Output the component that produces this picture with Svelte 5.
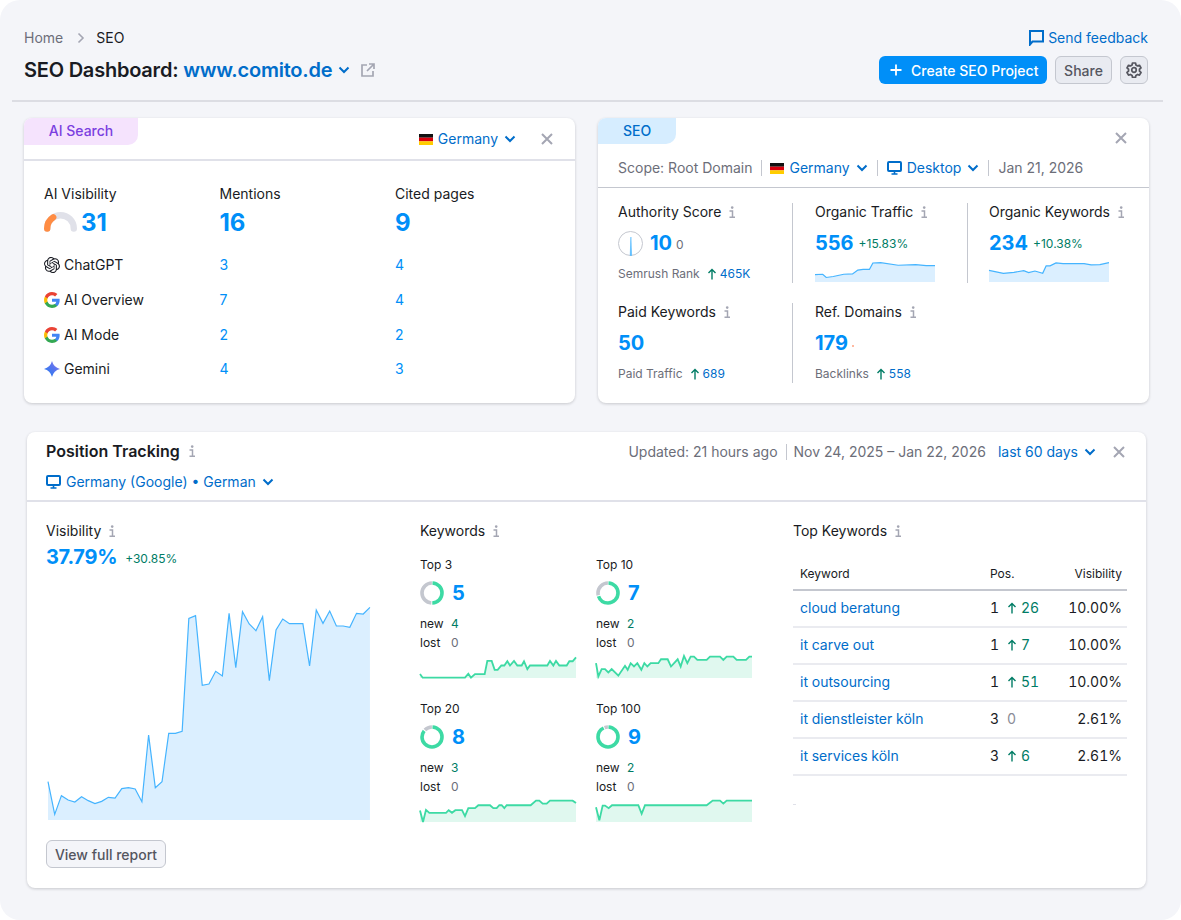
<script>
  const pts = (a) => a.map((p) => p.join(',')).join(' ');
  const area = (a, bottom) => `${a[0][0]},${bottom} ${pts(a)} ${a[a.length - 1][0]},${bottom}`;

  const visY = [545,643,587,600,606,590,602,611,604,592,594,566,563,567,605,405,563,545,400,400,394,55,47,256,252,214,228,40,203,35,72,92,50,242,90,57,71,71,71,198,30,70,33,78,78,82,40,42,22];
  const visLine = visY.map((y, i) => [55 + i * 20.1, y]);

  const traffic = [[613,239],[635,238],[645,248],[665,245],[695,238],[720,237],[735,225],[750,223],[768,223],[778,203],[800,202],[850,210],[900,208],[930,211],[955,211]];
  const orgKw = [[1109,226],[1150,235],[1180,232],[1208,227],[1222,233],[1240,228],[1262,235],[1272,212],[1283,212],[1300,203],[1320,205],[1380,205],[1400,209],[1425,208],[1451,202]];

  const tops = [
    { label: 'Top 3', value: 5, isNew: 4, share: 0.5, x0: 30, y0: 315, bottom: 385,
      line: [[30,373],[38,384],[165,384],[175,372],[183,384],[195,373],[224,373],[232,333],[245,333],[254,360],[263,360],[274,347],[283,347],[292,334],[300,347],[312,333],[322,347],[335,347],[342,334],[352,358],[360,347],[412,347],[420,333],[430,347],[438,333],[448,347],[470,347],[478,334],[488,334],[498,322]] },
    { label: 'Top 10', value: 7, isNew: 2, share: 0.7, x0: 558, y0: 315, bottom: 385,
      line: [[558,340],[565,380],[575,358],[585,358],[595,368],[605,358],[625,378],[645,348],[653,360],[662,340],[672,350],[682,340],[694,360],[703,340],[712,350],[722,340],[745,340],[753,328],[773,328],[783,350],[803,328],[812,350],[822,318],[832,340],[842,320],[852,320],[862,330],[890,330],[900,320],[930,320],[940,330],[950,320],[970,320],[980,330],[1008,330],[1018,320],[1026,320]] },
    { label: 'Top 20', value: 8, isNew: 3, share: 0.86, x0: 30, y0: 310, bottom: 380,
      line: [[30,345],[39,380],[48,343],[58,352],[108,352],[116,344],[126,352],[136,344],[156,344],[165,362],[175,338],[195,338],[205,329],[240,329],[250,338],[260,338],[268,329],[275,329],[283,338],[290,329],[362,329],[378,315],[388,315],[398,324],[410,324],[420,315],[488,315],[498,322]] },
    { label: 'Top 100', value: 9, isNew: 2, share: 0.93, x0: 558, y0: 310, bottom: 380,
      line: [[558,335],[568,375],[578,330],[585,330],[596,338],[606,329],[685,329],[695,355],[705,329],[890,329],[908,315],[930,315],[940,324],[950,315],[1026,315]] }
  ];

  const keywords = [
    { k: 'cloud beratung', pos: 1, delta: 26, vis: '10.00%' },
    { k: 'it carve out', pos: 1, delta: 7, vis: '10.00%' },
    { k: 'it outsourcing', pos: 1, delta: 51, vis: '10.00%' },
    { k: 'it dienstleister köln', pos: 3, delta: 0, vis: '2.61%' },
    { k: 'it services köln', pos: 3, delta: 6, vis: '2.61%' }
  ];

  const aiRows = [
    { name: 'ChatGPT', icon: 'gpt', m: 3, c: 4 },
    { name: 'AI Overview', icon: 'g', m: 7, c: 4 },
    { name: 'AI Mode', icon: 'g', m: 2, c: 2 },
    { name: 'Gemini', icon: 'gem', m: 4, c: 3 }
  ];

  const C = 2 * Math.PI * 10;
</script>

{#snippet info()}
  <svg class="info" width="8" height="13" viewBox="0 0 8 13" aria-hidden="true"><circle cx="4.2" cy="1.6" r="1.3" fill="#a4a6b3"/><path d="M1.5 5H4.5V11.2H7M4.5 11.2H1.5" fill="none" stroke="#a4a6b3" stroke-width="1.5"/></svg>
{/snippet}
{#snippet chev()}
  <svg class="chev" width="12" height="8" viewBox="0 0 12 8" aria-hidden="true"><path d="M1.5 1.5 6 6 10.5 1.5" fill="none" stroke="#006dca" stroke-width="2"/></svg>
{/snippet}
{#snippet close()}
  <svg class="close" width="12" height="12" viewBox="0 0 12 12" aria-hidden="true"><path d="M1 1 11 11M11 1 1 11" fill="none" stroke="#a4a6b3" stroke-width="2"/></svg>
{/snippet}
{#snippet flag()}
  <svg class="flag" width="14" height="11" viewBox="0 0 14 11" aria-hidden="true"><rect width="14" height="3.7" fill="#111"/><rect y="3.7" width="14" height="3.7" fill="#d9000d"/><rect y="7.3" width="14" height="3.7" fill="#ffcd00"/></svg>
{/snippet}
{#snippet monitor()}
  <svg class="mon" width="15" height="14" viewBox="0 0 15 14" aria-hidden="true"><rect x="1" y="1" width="13" height="9" rx="1" fill="none" stroke="#006dca" stroke-width="2"/><path d="M7.5 10v2.5M4.5 13h6" stroke="#006dca" stroke-width="1.6"/></svg>
{/snippet}
{#snippet up()}
  <svg class="up" width="10" height="12" viewBox="0 0 10 12" aria-hidden="true"><path d="M5 11.5V1.5M1.5 5 5 1.5 8.5 5" fill="none" stroke="#007c65" stroke-width="1.4"/></svg>
{/snippet}
{#snippet gLogo()}
  <svg width="16" height="16" viewBox="0 0 24 24" aria-hidden="true"><path fill="#4285F4" d="M23.5 12.3c0-.8-.1-1.6-.2-2.3H12v4.5h6.5c-.3 1.5-1.1 2.8-2.4 3.6v3h3.9c2.2-2.1 3.5-5.1 3.5-8.8z"/><path fill="#34A853" d="M12 24c3.2 0 6-1.1 8-2.9l-3.9-3c-1.1.7-2.5 1.2-4.1 1.2-3.1 0-5.8-2.1-6.7-5H1.3v3.1C3.3 21.3 7.3 24 12 24z"/><path fill="#FBBC05" d="M5.3 14.3c-.5-1.5-.5-3.1 0-4.6V6.6H1.3c-1.7 3.3-1.7 7.5 0 10.8l4-3.1z"/><path fill="#EA4335" d="M12 4.8c1.8 0 3.4.6 4.6 1.8l3.5-3.5C18 1.1 15.2 0 12 0 7.3 0 3.3 2.7 1.3 6.6l4 3.1c.9-2.8 3.6-4.9 6.7-4.9z"/></svg>
{/snippet}
{#snippet gpt()}
  <svg width="16" height="16" viewBox="0 0 24 24" aria-hidden="true"><path fill="#191b23" d="M22.2819 9.8211a5.9847 5.9847 0 0 0-.5157-4.9108 6.0462 6.0462 0 0 0-6.5098-2.9A6.0651 6.0651 0 0 0 4.9807 4.1818a5.9847 5.9847 0 0 0-3.9977 2.9 6.0462 6.0462 0 0 0 .7427 7.0966 5.98 5.98 0 0 0 .511 4.9107 6.051 6.051 0 0 0 6.5146 2.9001A5.9847 5.9847 0 0 0 13.2599 24a6.0557 6.0557 0 0 0 5.7718-4.2058 5.9894 5.9894 0 0 0 3.9977-2.9001 6.0557 6.0557 0 0 0-.7475-7.0729zm-9.022 12.6081a4.4755 4.4755 0 0 1-2.8764-1.0408l.1419-.0804 4.7783-2.7582a.7948.7948 0 0 0 .3927-.6813v-6.7369l2.02 1.1686a.071.071 0 0 1 .038.052v5.5826a4.504 4.504 0 0 1-4.4945 4.4944zm-9.6607-4.1254a4.4708 4.4708 0 0 1-.5346-3.0137l.142.0852 4.783 2.7582a.7712.7712 0 0 0 .7806 0l5.8428-3.3685v2.3324a.0804.0804 0 0 1-.0332.0615L9.74 19.9502a4.4992 4.4992 0 0 1-6.1408-1.6464zM2.3408 7.8956a4.485 4.485 0 0 1 2.3655-1.9728V11.6a.7664.7664 0 0 0 .3879.6765l5.8144 3.3543-2.0201 1.1685a.0757.0757 0 0 1-.071 0l-4.8303-2.7865A4.504 4.504 0 0 1 2.3408 7.872zm16.5963 3.8558L13.1038 8.364 15.1192 7.2a.0757.0757 0 0 1 .071 0l4.8303 2.7913a4.4944 4.4944 0 0 1-.6765 8.1042v-5.6772a.79.79 0 0 0-.407-.667zm2.0107-3.0231l-.142-.0852-4.7735-2.7818a.7759.7759 0 0 0-.7854 0L9.409 9.2297V6.8974a.0662.0662 0 0 1 .0284-.0615l4.8303-2.7866a4.4992 4.4992 0 0 1 6.6802 4.66zM8.3065 12.863l-2.02-1.1638a.0804.0804 0 0 1-.038-.0567V6.0742a4.4992 4.4992 0 0 1 7.3757-3.4537l-.142.0805L8.704 5.459a.7948.7948 0 0 0-.3927.6813zm1.0976-2.3654l2.602-1.4998 2.6069 1.4998v2.9994l-2.5974 1.4997-2.6067-1.4997Z"/></svg>
{/snippet}
{#snippet gem()}
  <svg width="16" height="16" viewBox="0 0 24 24" aria-hidden="true"><defs><linearGradient id="gemg" x1="0" y1="1" x2="1" y2="0"><stop offset="0" stop-color="#1c7df0"/><stop offset="0.6" stop-color="#5b74ee"/><stop offset="1" stop-color="#a58df0"/></linearGradient></defs><path fill="url(#gemg)" d="M12 0Q14.5 9.5 24 12Q14.5 14.5 12 24Q9.5 14.5 0 12Q9.5 9.5 12 0Z"/></svg>
{/snippet}

<div class="page">
  <header class="head">
    <div>
      <nav class="crumbs">
        <span class="grey">Home</span>
        <svg width="8" height="12" viewBox="0 0 8 12" aria-hidden="true"><path d="M1.5 1.5 6 6 1.5 10.5" fill="none" stroke="#a4a6b3" stroke-width="1.6"/></svg>
        <span>SEO</span>
      </nav>
      <h1 class="title">
        SEO Dashboard:&nbsp;<span class="domain">www.comito.de</span>
        {@render chev()}
        <svg class="ext" width="14" height="14" viewBox="0 0 14 14" aria-hidden="true"><path d="M6 2H1v11h11V8M8 1h5v5M13 1 6 8" fill="none" stroke="#a4a6b3" stroke-width="1.7"/></svg>
      </h1>
    </div>
    <div class="actions">
      <a class="feedback" href="#f">
        <svg width="15" height="16" viewBox="0 0 15 16" aria-hidden="true"><path d="M1 14.5V1h13v10.5H3.5z" fill="none" stroke="#006dca" stroke-width="2"/></svg>
        Send feedback
      </a>
      <div class="btns">
        <button class="primary"><svg width="12" height="12" viewBox="0 0 12 12" aria-hidden="true"><path d="M6 .5v11M.5 6h11" stroke="#fff" stroke-width="1.8"/></svg>Create SEO Project</button>
        <button class="sec">Share</button>
        <button class="sec gear" aria-label="Settings"><svg width="16" height="16" viewBox="0 0 24 24" aria-hidden="true"><path fill="none" stroke="#55565f" stroke-width="2.6" stroke-linejoin="round" d="M9.7 1.5h4.6l.6 3 2.4 1.4 2.9-1 2.3 4-2.3 2v2.8l2.3 2-2.3 4-2.9-1-2.4 1.4-.6 3H9.7l-.6-3-2.4-1.4-2.9 1-2.3-4 2.3-2v-2.8l-2.3-2 2.3-4 2.9 1 2.4-1.4z"/><circle cx="12" cy="12" r="3.4" fill="none" stroke="#55565f" stroke-width="2.6"/></svg></button>
      </div>
    </div>
  </header>
  <div class="rule"></div>

  <div class="cards">
    <section class="card ai">
      <div class="ai-head">
        <div class="tab tab-ai">AI Search</div>
        <div class="ai-ctrl">
          {@render flag()}
          <span class="link">Germany</span>
          {@render chev()}
          {@render close()}
        </div>
      </div>
      <div class="ai-body">
        <div class="ai-grid">
          <div>AI Visibility</div><div>Mentions</div><div>Cited pages</div>
          <div class="big-row">
            <svg class="gauge" width="33" height="21" viewBox="0 0 33 21" aria-hidden="true"><path d="M3.2 17.5A13.3 13.3 0 0 1 29.800 17.5" fill="none" stroke="#e0e1e9" stroke-width="6.4" stroke-linecap="round"/><path d="M3.2 17.500A13.300 13.300 0 0 1 9.200 6.300" fill="none" stroke="#ff8c43" stroke-width="6.400" stroke-linecap="round"/></svg>
            <span class="big">31</span>
          </div>
          <div class="big-row"><span class="big">16</span></div>
          <div class="big-row"><span class="big">9</span></div>
        </div>
        <div class="ai-rows">
          {#each aiRows as r}
            <div class="ai-row">
              <div class="engine">
                {#if r.icon === 'gpt'}{@render gpt()}{:else if r.icon === 'g'}{@render gLogo()}{:else}{@render gem()}{/if}
                {r.name}
              </div>
              <div class="num">{r.m}</div>
              <div class="num">{r.c}</div>
            </div>
          {/each}
        </div>
      </div>
    </section>

    <section class="card seo">
      <div class="seo-top">
        <div class="tab tab-seo">SEO</div>
        {@render close()}
      </div>
      <div class="scope">
        <span class="grey">Scope: Root Domain</span><i class="sep"></i>
        {@render flag()}<span class="link">Germany</span>{@render chev()}<i class="sep"></i>
        {@render monitor()}<span class="link">Desktop</span>{@render chev()}<i class="sep"></i>
        <span class="grey">Jan 21, 2026</span>
      </div>
      <div class="metrics">
        <div class="cell c1">
          <div class="mt">Authority Score {@render info()}</div>
          <div class="mv">
            <svg width="25" height="25" viewBox="0 0 25 25" aria-hidden="true"><circle cx="12.5" cy="12.5" r="12" fill="none" stroke="#c4c7cf"/><path d="M12.2 24.5 12.9 6 13.6 24.5z" fill="#45b4ff" stroke="#45b4ff" stroke-width=".5"/></svg>
            <span class="big m">10</span><span class="zero">0</span>
          </div>
          <div class="mf"><span class="grey">Semrush Rank</span>{@render up()}<span class="link">465K</span></div>
        </div>
        <div class="cell c2">
          <div class="mt">Organic Traffic {@render info()}</div>
          <div class="mv"><span class="big">556</span><span class="pct">+15.83%</span></div>
          <svg class="mini" viewBox="613 200 342 62" preserveAspectRatio="none" aria-hidden="true"><polygon points={area(traffic, 262)} fill="#dbefff"/><polyline points={pts(traffic)} fill="none" stroke="#45b4ff" stroke-width="3.6"/></svg>
        </div>
        <div class="cell c3">
          <div class="mt">Organic Keywords {@render info()}</div>
          <div class="mv"><span class="big">234</span><span class="pct">+10.38%</span></div>
          <svg class="mini" viewBox="1109 200 342 62" preserveAspectRatio="none" aria-hidden="true"><polygon points={area(orgKw, 262)} fill="#dbefff"/><polyline points={pts(orgKw)} fill="none" stroke="#45b4ff" stroke-width="3.6"/></svg>
        </div>
        <div class="cell c1">
          <div class="mt">Paid Keywords {@render info()}</div>
          <div class="mv"><span class="big">50</span></div>
          <div class="mf"><span class="grey">Paid Traffic</span>{@render up()}<span class="link">689</span></div>
        </div>
        <div class="cell c2 noline">
          <div class="mt">Ref. Domains {@render info()}</div>
          <div class="mv"><span class="big">179</span><i class="speck"></i></div>
          <div class="mf"><span class="grey">Backlinks</span>{@render up()}<span class="link">558</span></div>
        </div>
      </div>
    </section>
  </div>

  <section class="card pt">
    <div class="pt-head">
      <div>
        <h2 class="pt-title">Position Tracking {@render info()}</h2>
        <div class="pt-sub">{@render monitor()}<span class="link">Germany (Google) • German</span>{@render chev()}</div>
      </div>
      <div class="pt-right">
        <span class="grey">Updated: 21 hours ago</span><i class="sep"></i>
        <span class="grey">Nov 24, 2025 – Jan 22, 2026</span>
        <span class="link last">last 60 days</span>{@render chev()}
        {@render close()}
      </div>
    </div>
    <div class="pt-body">
      <div class="col">
        <div class="coltitle">Visibility {@render info()}</div>
        <div class="visval"><span class="big">37.79%</span><span class="pct">+30.85%</span></div>
        <svg class="vischart" viewBox="55 0 965 660" preserveAspectRatio="none" aria-hidden="true">
          <polygon points={area(visLine, 660)} fill="#dbefff"/>
          <polyline points={pts(visLine)} fill="none" stroke="#45b4ff" stroke-width="3.6"/>
        </svg>
        <button class="sec report">View full report</button>
      </div>
      <div class="col">
        <div class="coltitle">Keywords {@render info()}</div>
        <div class="tops">
          {#each tops as t}
            <div class="top">
              <div class="tl">{t.label}</div>
              <div class="tv">
                <svg width="24" height="24" viewBox="0 0 24 24" aria-hidden="true">
                  <g transform="rotate(-90 12 12)" fill="none" stroke-width="3.6">
                    <circle cx="12" cy="12" r="10" stroke="#c4c7cf" stroke-dasharray="{C * (1 - t.share) - 1} {C}" stroke-dashoffset={-(C * t.share + 0.5)}/>
                    <circle cx="12" cy="12" r="10" stroke="#3ddaa4" stroke-dasharray="{C * t.share - 1} {C}" stroke-dashoffset="-0.5"/>
                  </g>
                </svg>
                <span class="big">{t.value}</span>
              </div>
              <div class="tn"><span>new</span><b>{t.isNew}</b></div>
              <div class="tn lost"><span>lost</span><b>0</b></div>
              <svg class="spark" viewBox="{t.x0} {t.y0} 468 70" preserveAspectRatio="none" aria-hidden="true">
                <polygon points={area(t.line, t.bottom)} fill="#e0f8ef"/>
                <polyline points={pts(t.line)} fill="none" stroke="#3ddaa4" stroke-width="5.5"/>
              </svg>
            </div>
          {/each}
        </div>
      </div>
      <div class="col col3">
        <div class="coltitle">Top Keywords {@render info()}</div>
        <div class="table">
          <div class="tr th"><span>Keyword</span><span>Pos.</span><span class="r">Visibility</span></div>
          {#each keywords as row}
            <div class="tr">
              <span class="link">{row.k}</span>
              <span class="pos"><em>{row.pos}</em>{#if row.delta}{@render up()}<span class="delta">{row.delta}</span>{:else}<span class="nil">0</span>{/if}</span>
              <span class="r">{row.vis}</span>
            </div>
          {/each}
        </div>
        <i class="stray"></i>
      </div>
    </div>
  </section>
</div>

<style>
  :global(body) { margin: 0; background: #fff; }
  .page {
    width: 1181px; height: 920px; box-sizing: border-box; background: #f4f5f9; border-radius: 20px;
    font-family: Inter, "Liberation Sans", sans-serif; font-size: 14px; line-height: 18px; color: #191b23; overflow: hidden;
  }
  svg { display: block; flex: none; }
  button { font-family: inherit; cursor: pointer; }
  h1, h2 { margin: 0; }
  i, em { font-style: normal; }
  .grey { color: #6c6e79; }
  .link { color: #006dca; }

  .head { display: flex; justify-content: space-between; height: 72px; padding: 28px 33px 0 24px; }
  .crumbs { display: flex; align-items: center; gap: 12px; height: 20px; }
  .crumbs svg { margin: 0 -1px 0 2px; }
  .title { display: flex; align-items: center; height: 28px; margin-top: 8px; font-size: 20px; font-weight: 600; line-height: 28px; letter-spacing: -0.22px; }
  .domain { color: #006dca; }
  .title .chev { margin-left: 6px; }
  .ext { margin-left: 11px; }
  .actions { display: flex; flex-direction: column; align-items: flex-end; }
  .feedback { display: flex; align-items: center; gap: 4px; height: 20px; color: #006dca; text-decoration: none; }
  .btns { display: flex; gap: 8px; margin-top: 8px; }
  .primary { display: flex; align-items: center; gap: 9px; height: 28px; width: 168px; padding: 0 0 0 11px; border: 0; border-radius: 6px; background: #008ff8; color: #fff; font-size: 14px; font-weight: 500; }
  .sec { height: 28px; border: 1px solid #c4c7cf; border-radius: 6px; background: #f4f5f9; color: #55565f; font-size: 14px; font-weight: 500; padding: 0; }
  .btns .sec { width: 57px; background: #e9ebf1; }
  .btns .gear { width: 28px; display: flex; align-items: center; justify-content: center; }
  .rule { height: 2px; margin: 0 18px 0 12px; background: #dcdde3; }

  .cards { display: flex; gap: 23px; padding: 16px 32px 0 24px; }
  .card { background: #fff; border-radius: 8px; box-shadow: 0 1px 3px rgba(25, 27, 35, .2); overflow: hidden; }
  .ai, .seo { flex: 1 1 0; height: 285px; }

  .tab { height: 27px; line-height: 26px; text-align: center; border-bottom-right-radius: 10px; font-weight: 500; }
  .tab-ai { width: 114px; background: #f5e3fd; color: #7b3fe0; }
  .tab-seo { width: 78px; background: #d6edff; color: #006dca; }
  .ai-head { display: flex; justify-content: space-between; height: 41px; border-bottom: 2px solid #e0e1e9; }
  .ai-ctrl { display: flex; align-items: center; height: 42px; padding-right: 22px; }
  .ai-ctrl .flag { margin-right: 5px; }
  .ai-ctrl .chev { margin-left: 6px; }
  .ai-ctrl .close { margin-left: 25px; }

  .ai-body { padding: 24px 20px 0; }
  .ai-grid { display: grid; grid-template-columns: 175.5px 175.5px 1fr; }
  .big-row { display: flex; align-items: center; gap: 4px; height: 28px; margin-top: 6px; }
  .gauge { margin-top: -3px; }
  .big { color: #008ff8; font-weight: 700; font-size: 24px; line-height: 28px; }
  .ai-rows { margin-top: 11px; }
  .ai-row { display: grid; grid-template-columns: 175.5px 175.5px 1fr; align-items: center; height: 34.7px; }
  .engine { display: flex; align-items: center; gap: 4px; }
  .num { color: #008ff8; }

  .seo-top { display: flex; justify-content: space-between; height: 40px; padding-right: 22px; }
  .seo-top .tab { height: 26px; line-height: 25px; }
  .seo-top .close { margin-top: 14px; }
  .scope { display: flex; align-items: center; height: 20px; padding: 0 20px 9px; border-bottom: 1px solid #c4c7cf; }
  .sep { width: 1px; height: 16px; background: #c4c7cf; margin: 0 9px; flex: none; }
  .scope .sep:first-of-type { margin-right: 8px; }
  .scope .flag { margin-right: 5px; }
  .scope .chev { margin-left: 6px; }
  .scope .mon { margin-right: 5px; }

  .metrics { display: grid; grid-template-columns: 175px 175px 1fr; grid-auto-rows: 80px; row-gap: 20px; padding: 15px 0 0 20px; }
  .cell { box-sizing: border-box; border-right: 1px solid #c4c7cf; }
  .c2 { padding-left: 22px; }
  .c3 { padding-left: 21px; border-right: 0; }
  .noline { border-right: 0; }
  .mt { display: flex; align-items: center; gap: 5px; height: 18px; white-space: nowrap; }
  .mt .info { margin-left: 2px; }
  .mv { display: flex; align-items: center; height: 24px; margin-top: 10px; }
  .mv .big { font-size: 20px; line-height: 24px; }
  .mv .m { margin-left: 7px; }
  .zero { color: #6c6e79; font-size: 12px; margin-left: 4px; margin-top: 3px; }
  .pct { color: #007c65; font-size: 12px; margin-left: 5px; margin-top: 2px; }
  .mf { display: flex; align-items: center; height: 18px; margin-top: 10px; font-size: 12px; }
  .mf .up { margin: 0 3px 0 7px; }
  .mini { display: block; width: 120px; height: 20px; margin-top: 7px; overflow: visible; }
  .speck { width: 2px; height: 2px; margin: 5px 0 0 4px; background: #ffb9a0; }

  .pt { margin: 29px 35px 0 27px; height: 456px; }
  .pt-head { display: flex; justify-content: space-between; height: 68px; padding: 0 21px 0 19px; border-bottom: 2px solid #e0e1e9; }
  .pt-title { display: flex; align-items: center; gap: 4px; height: 20px; margin-top: 9px; font-size: 16px; font-weight: 600; line-height: 20px; }
  .pt-title .info { margin-left: 4px; }
  .pt-sub { display: flex; align-items: center; height: 20px; margin-top: 11px; }
  .pt-sub .mon { margin-right: 5px; }
  .pt-sub .chev { margin-left: 6px; }
  .pt-right { display: flex; align-items: center; height: 20px; margin-top: 10px; }
  .pt-right .sep { margin: 0 7px 0 8px; }
  .last { margin-left: 12px; }
  .pt-right .chev { margin-left: 6px; }
  .pt-right .close { margin-left: 17px; }

  .pt-body { display: grid; grid-template-columns: 374px 373px 334px; padding: 20px 0 0 19px; }
  .coltitle { display: flex; align-items: center; gap: 5px; height: 18px; }
  .coltitle .info { margin-left: 2px; }
  .visval { display: flex; align-items: center; height: 22px; margin-top: 6px; }
  .visval .big { font-size: 20px; line-height: 22px; letter-spacing: -0.3px; }
  .visval .pct { margin-left: 8px; margin-top: 3px; }
  .vischart { display: block; width: 322px; height: 220px; margin: 32px 0 0 2px; overflow: visible; }
  .report { display: block; width: 120px; margin-top: 20px; }

  .tops { display: grid; grid-template-columns: 176px 176px; row-gap: 22px; margin-top: 16px; }
  .tl { font-size: 12px; }
  .tv { display: flex; align-items: center; gap: 8px; height: 24px; margin-top: 7px; }
  .tv .big { font-size: 20px; }
  .tn { display: flex; height: 18px; margin-top: 10px; font-size: 12px; }
  .tn.lost { margin-top: 1px; }
  .tn span { width: 31px; }
  .tn b { font-weight: 400; color: #007c65; }
  .tn.lost b { color: #6c6e79; }
  .spark { display: block; width: 156px; height: 23px; margin-top: 3px; overflow: visible; }

  .table { margin-top: 16px; font-variant-numeric: tabular-nums; }
  .tr { display: grid; grid-template-columns: 190px 1fr auto; align-items: center; box-sizing: border-box; height: 37px; padding: 0 5px 2px 7px; border-bottom: 2px solid #eaebf0; }
  .th { height: 35px; padding-top: 3px; padding-bottom: 0; font-size: 12px; border-bottom-color: #c4c7cf; }
  .r { text-align: right; }
  .pos { display: flex; align-items: center; }
  .pos em { width: 17px; }
  .pos .up { margin-right: 4px; }
  .delta { color: #007c65; }
  .nil { color: #8a8c97; }
  .stray { display: block; width: 3px; height: 1px; margin-top: 28px; background: #e0e1e9; }
</style>
